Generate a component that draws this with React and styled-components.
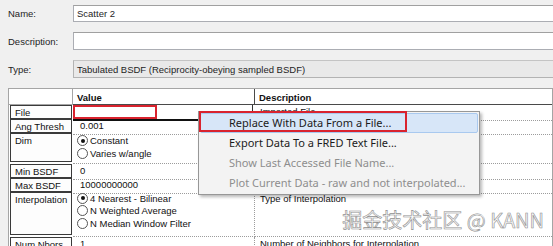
import React from "react";
import styled, { createGlobalStyle } from "styled-components";

const GlobalStyle = createGlobalStyle`
  html, body { margin: 0; padding: 0; }
  body {
    background: #f0f0f0;
    font-family: "Liberation Sans", Arial, sans-serif;
  }
`;

const Page = styled.div`
  position: relative;
  width: 553px;
  height: 246px;
  overflow: hidden;
  padding-top: 5px;
  box-sizing: border-box;
  background: #f0f0f0;
`;

const Form = styled.div`
  display: grid;
  grid-template-columns: 65px 1fr;
  grid-template-rows: 17px 18px 18px;
  row-gap: 10px;
  padding-left: 8px;
  font-size: 9.5px;
  color: #1e1e1e;
`;

const FieldLabel = styled.div`
  display: flex;
  align-items: center;
`;

const TextBox = styled.div`
  display: flex;
  align-items: center;
  margin-right: -4px;
  padding-left: 3px;
  background: ${p => (p.readOnly ? "#e9e9e9" : "#fff")};
  border: 1px solid ${p => (p.readOnly ? "#b3b3b3" : "#abadb3")};
  border-top-color: ${p => (p.readOnly ? "#c4c4c4" : "#a0a0a0")};
`;

const Table = styled.div`
  margin: 10px 0 0 8px;
  width: 545px;
  box-sizing: border-box;
  border-top: 1px solid #a5a5a5;
  border-left: 1px solid #a5a5a5;
  border-right: 1px solid #a5a5a5;
  background: #fff;
  font-size: 9.5px;
  color: #111;
`;

const Row = styled.div`
  display: grid;
  grid-template-columns: 64px 182px 1fr;
  height: ${p => p.h}px;
`;

const HeadBlank = styled.div`
  border-right: 1px solid #a5a5a5;
  border-bottom: 1px solid #a5a5a5;
`;

const HeadCell = styled.div`
  font-weight: bold;
  padding: 3px 0 0 4px;
  border-bottom: 1px solid #4a4a4a;
  border-right: ${p => (p.first ? "1px solid #4a4a4a" : "none")};
`;

const LabelCell = styled.div`
  margin: 0 1px 2px 1px;
  padding: 1px 4px 0;
  border: 1px solid #3a3a3a;
  background: #fdfdfd;
  line-height: 11px;
  white-space: nowrap;
`;

const ValueCell = styled.div`
  padding: 1px 0 0 7px;
  line-height: 12px;
  border-right: 1px dotted #9c9c9c;
  border-bottom: 1px dotted #9c9c9c;
  white-space: nowrap;
`;

const DescCell = styled.div`
  padding: 1px 0 0 5px;
  line-height: 12px;
  border-bottom: 1px dotted #9c9c9c;
  white-space: nowrap;
  overflow: hidden;
`;

const FileEditor = styled.div`
  display: flex;
  border-bottom: 2px solid #111;
  border-right: 1px solid #333;
  margin-right: 2px;
`;

const RedMark = styled.div`
  width: 84px;
  height: 100%;
  box-sizing: border-box;
  border: 2px solid #d9232e;
`;

const RadioList = styled.div`
  display: flex;
  flex-direction: column;
  padding: ${p => p.top}px 0 0 4px;
  border-right: 1px dotted #9c9c9c;
  border-bottom: 1px dotted #9c9c9c;
`;

const RadioLine = styled.div`
  display: flex;
  align-items: center;
  gap: 2px;
  height: ${p => p.h}px;
  white-space: nowrap;
`;

const RadioDot = styled.span`
  position: relative;
  width: 11px;
  height: 11px;
  box-sizing: border-box;
  border-radius: 50%;
  border: 1px solid #555;
  background: #fff;
  &::after {
    content: "";
    display: ${p => (p.on ? "block" : "none")};
    position: absolute;
    left: 2.5px;
    top: 2.5px;
    width: 4px;
    height: 4px;
    border-radius: 50%;
    background: #111;
  }
`;

const Menu = styled.div`
  position: absolute;
  left: 198px;
  top: 111px;
  width: 282px;
  padding: 1px;
  box-sizing: border-box;
  background: #f3f3f3;
  border: 1px solid #979797;
  box-shadow: 2px 2px 3px rgba(0, 0, 0, 0.28);
  font-family: "Noto Sans", "Open Sans", sans-serif;
  font-size: 11px;
`;

const MenuItem = styled.div`
  position: relative;
  height: 20px;
  box-sizing: border-box;
  line-height: 18px;
  padding-left: 28px;
  white-space: nowrap;
  color: ${p => (p.disabled ? "#8e8e8e" : "#1b1b1b")};
  background: ${p => (p.active ? "#d7e6f8" : "transparent")};
  border: 1px solid ${p => (p.active ? "#a9c9ef" : "transparent")};
  border-radius: 2px;
`;

const MenuMark = styled.div`
  position: absolute;
  left: -2px;
  top: -3px;
  width: 208px;
  height: 21px;
  box-sizing: border-box;
  border: 2px solid #d9232e;
`;

const Watermark = styled.div`
  position: absolute;
  right: 9px;
  top: 207px;
  font-family: "Noto Sans CJK SC", "Noto Sans", sans-serif;
  font-size: 20px;
  line-height: 26px;
  color: rgba(250, 250, 250, 0.85);
  -webkit-text-stroke: 0.6px #909090;
`;

const Radio = ({ on, h, children }) => (
  <RadioLine h={h}>
    <RadioDot on={on} />
    {children}
  </RadioLine>
);

export default function App() {
  return (
    <Page>
      <GlobalStyle />
      <Form>
        <FieldLabel>Name:</FieldLabel>
        <TextBox>Scatter 2</TextBox>
        <FieldLabel>Description:</FieldLabel>
        <TextBox />
        <FieldLabel>Type:</FieldLabel>
        <TextBox readOnly>Tabulated BSDF (Reciprocity-obeying sampled BSDF)</TextBox>
      </Form>

      <Table>
        <Row h={16}>
          <HeadBlank />
          <HeadCell first>Value</HeadCell>
          <HeadCell>Description</HeadCell>
        </Row>
        <Row h={14}>
          <LabelCell>File</LabelCell>
          <FileEditor>
            <RedMark />
          </FileEditor>
          <DescCell>Imported File</DescCell>
        </Row>
        <Row h={14}>
          <LabelCell>Ang Thresh</LabelCell>
          <ValueCell>0.001</ValueCell>
          <DescCell />
        </Row>
        <Row h={31}>
          <LabelCell>Dim</LabelCell>
          <RadioList top={1}>
            <Radio on h={13}>Constant</Radio>
            <Radio h={13}>Varies w/angle</Radio>
          </RadioList>
          <DescCell />
        </Row>
        <Row h={14}>
          <LabelCell>Min BSDF</LabelCell>
          <ValueCell>0</ValueCell>
          <DescCell />
        </Row>
        <Row h={14}>
          <LabelCell>Max BSDF</LabelCell>
          <ValueCell>10000000000</ValueCell>
          <DescCell />
        </Row>
        <Row h={45}>
          <LabelCell>Interpolation</LabelCell>
          <RadioList top={0}>
            <Radio on h={12.5}>4 Nearest - Bilinear</Radio>
            <Radio h={12.5}>N Weighted Average</Radio>
            <Radio h={12.5}>N Median Window Filter</Radio>
          </RadioList>
          <DescCell>Type of Interpolation</DescCell>
        </Row>
        <Row h={14}>
          <LabelCell>Num Nbors</LabelCell>
          <ValueCell>1</ValueCell>
          <DescCell>Number of Neighbors for Interpolation</DescCell>
        </Row>
      </Table>

      <Menu>
        <MenuItem active>
          Replace With Data From a File...
          <MenuMark />
        </MenuItem>
        <MenuItem>Export Data To a FRED Text File...</MenuItem>
        <MenuItem disabled>Show Last Accessed File Name...</MenuItem>
        <MenuItem disabled>Plot Current Data - raw and not interpolated...</MenuItem>
      </Menu>

      <Watermark>掘金技术社区 @ KANN</Watermark>
    </Page>
  );
}
